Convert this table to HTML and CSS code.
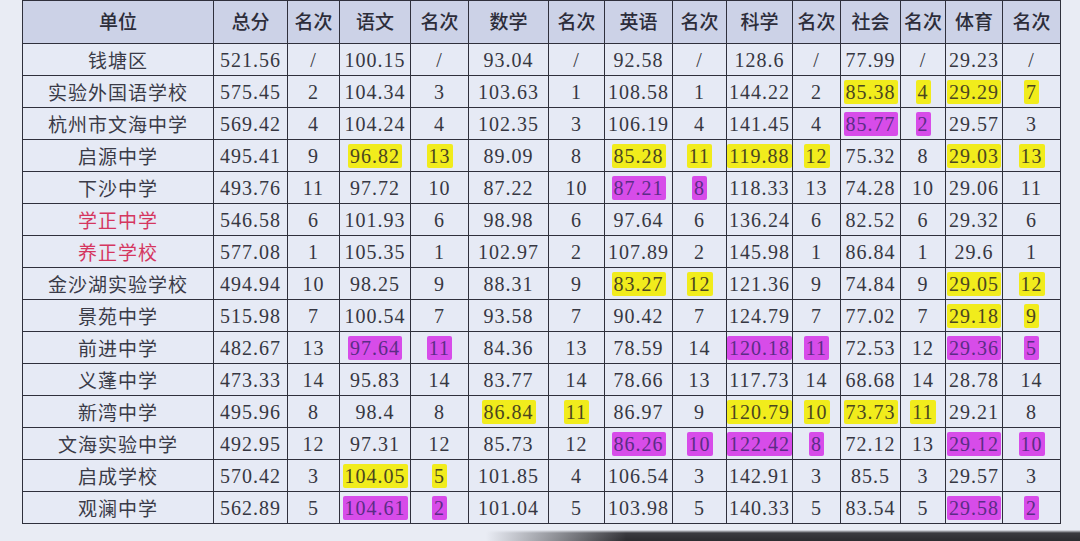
FILE: index.html
```html
<!DOCTYPE html>
<html lang="zh-CN">
<head>
<meta charset="utf-8">
<title>成绩表</title>
<link rel="stylesheet" href="styles.css">
</head>
<body>
<div class="sheet">
<table class="scores">
<colgroup>
<col class="c-unit"><col class="c-total"><col class="c-r1"><col class="c-yw"><col class="c-r2"><col class="c-sx"><col class="c-r3"><col class="c-yy"><col class="c-r4"><col class="c-kx"><col class="c-r5"><col class="c-sh"><col class="c-r6"><col class="c-ty"><col class="c-r7">
</colgroup>
<thead>
<tr><th>单位</th><th>总分</th><th>名次</th><th>语文</th><th>名次</th><th>数学</th><th>名次</th><th>英语</th><th>名次</th><th>科学</th><th>名次</th><th>社会</th><th>名次</th><th>体育</th><th>名次</th></tr>
</thead>
<tbody>
<tr><td class="name">钱塘区</td><td>521.56</td><td>/</td><td>100.15</td><td>/</td><td>93.04</td><td>/</td><td>92.58</td><td>/</td><td>128.6</td><td>/</td><td>77.99</td><td>/</td><td>29.23</td><td>/</td></tr>
<tr><td class="name">实验外国语学校</td><td>575.45</td><td>2</td><td>104.34</td><td>3</td><td>103.63</td><td>1</td><td>108.58</td><td>1</td><td>144.22</td><td>2</td><td><span class="hy">85.38</span></td><td><span class="hy">4</span></td><td><span class="hy">29.29</span></td><td><span class="hy">7</span></td></tr>
<tr><td class="name">杭州市文海中学</td><td>569.42</td><td>4</td><td>104.24</td><td>4</td><td>102.35</td><td>3</td><td>106.19</td><td>4</td><td>141.45</td><td>4</td><td><span class="hm">85.77</span></td><td><span class="hm">2</span></td><td>29.57</td><td>3</td></tr>
<tr><td class="name">启源中学</td><td>495.41</td><td>9</td><td><span class="hy">96.82</span></td><td><span class="hy">13</span></td><td>89.09</td><td>8</td><td><span class="hy">85.28</span></td><td><span class="hy">11</span></td><td><span class="hy">119.88</span></td><td><span class="hy">12</span></td><td>75.32</td><td>8</td><td><span class="hy">29.03</span></td><td><span class="hy">13</span></td></tr>
<tr><td class="name">下沙中学</td><td>493.76</td><td>11</td><td>97.72</td><td>10</td><td>87.22</td><td>10</td><td><span class="hm">87.21</span></td><td><span class="hm">8</span></td><td>118.33</td><td>13</td><td>74.28</td><td>10</td><td>29.06</td><td>11</td></tr>
<tr><td class="name red">学正中学</td><td>546.58</td><td>6</td><td>101.93</td><td>6</td><td>98.98</td><td>6</td><td>97.64</td><td>6</td><td>136.24</td><td>6</td><td>82.52</td><td>6</td><td>29.32</td><td>6</td></tr>
<tr><td class="name red">养正学校</td><td>577.08</td><td>1</td><td>105.35</td><td>1</td><td>102.97</td><td>2</td><td>107.89</td><td>2</td><td>145.98</td><td>1</td><td>86.84</td><td>1</td><td>29.6</td><td>1</td></tr>
<tr><td class="name">金沙湖实验学校</td><td>494.94</td><td>10</td><td>98.25</td><td>9</td><td>88.31</td><td>9</td><td><span class="hy">83.27</span></td><td><span class="hy">12</span></td><td>121.36</td><td>9</td><td>74.84</td><td>9</td><td><span class="hy">29.05</span></td><td><span class="hy">12</span></td></tr>
<tr><td class="name">景苑中学</td><td>515.98</td><td>7</td><td>100.54</td><td>7</td><td>93.58</td><td>7</td><td>90.42</td><td>7</td><td>124.79</td><td>7</td><td>77.02</td><td>7</td><td><span class="hy">29.18</span></td><td><span class="hy">9</span></td></tr>
<tr><td class="name">前进中学</td><td>482.67</td><td>13</td><td><span class="hm">97.64</span></td><td><span class="hm">11</span></td><td>84.36</td><td>13</td><td>78.59</td><td>14</td><td><span class="hm">120.18</span></td><td><span class="hm">11</span></td><td>72.53</td><td>12</td><td><span class="hm">29.36</span></td><td><span class="hm">5</span></td></tr>
<tr><td class="name">义蓬中学</td><td>473.33</td><td>14</td><td>95.83</td><td>14</td><td>83.77</td><td>14</td><td>78.66</td><td>13</td><td>117.73</td><td>14</td><td>68.68</td><td>14</td><td>28.78</td><td>14</td></tr>
<tr><td class="name">新湾中学</td><td>495.96</td><td>8</td><td>98.4</td><td>8</td><td><span class="hy">86.84</span></td><td><span class="hy">11</span></td><td>86.97</td><td>9</td><td><span class="hy">120.79</span></td><td><span class="hy">10</span></td><td><span class="hy">73.73</span></td><td><span class="hy">11</span></td><td>29.21</td><td>8</td></tr>
<tr><td class="name">文海实验中学</td><td>492.95</td><td>12</td><td>97.31</td><td>12</td><td>85.73</td><td>12</td><td><span class="hm">86.26</span></td><td><span class="hm">10</span></td><td><span class="hm">122.42</span></td><td><span class="hm">8</span></td><td>72.12</td><td>13</td><td><span class="hm">29.12</span></td><td><span class="hm">10</span></td></tr>
<tr><td class="name">启成学校</td><td>570.42</td><td>3</td><td><span class="hy">104.05</span></td><td><span class="hy">5</span></td><td>101.85</td><td>4</td><td>106.54</td><td>3</td><td>142.91</td><td>3</td><td>85.5</td><td>3</td><td>29.57</td><td>3</td></tr>
<tr><td class="name">观澜中学</td><td>562.89</td><td>5</td><td><span class="hm">104.61</span></td><td><span class="hm">2</span></td><td>101.04</td><td>5</td><td>103.98</td><td>5</td><td>140.33</td><td>5</td><td>83.54</td><td>5</td><td><span class="hm">29.58</span></td><td><span class="hm">2</span></td></tr>
</tbody>
</table>
<div class="edge"></div>
</div>
</body>
</html>
```

FILE: styles.css
```css
html, body {
  margin: 0;
  padding: 0;
}
body {
  width: 1080px;
  height: 541px;
  overflow: hidden;
  background: #e9ecf4;
}
.sheet {
  display: flex;
  flex-direction: column;
  height: 541px;
}
.scores {
  flex: none;
  margin-left: 22px;
  width: 1038px;
  table-layout: fixed;
  border-collapse: collapse;
  font-family: "Liberation Serif", "Noto Sans CJK SC", serif;
  color: #363742;
}
.c-unit { width: 191px; }
.c-total { width: 74px; }
.c-r1 { width: 52px; }
.c-yw { width: 71px; }
.c-r2 { width: 58px; }
.c-sx { width: 80px; }
.c-r3 { width: 56px; }
.c-yy { width: 68px; }
.c-r4 { width: 54px; }
.c-kx { width: 66px; }
.c-r5 { width: 48px; }
.c-sh { width: 60px; }
.c-r6 { width: 45px; }
.c-ty { width: 57px; }
.c-r7 { width: 58px; }

.scores th,
.scores td {
  border: 1.5px solid #2f303c;
  text-align: center;
  vertical-align: middle;
  padding: 0;
  white-space: nowrap;
}
.scores th {
  height: 43px;
  background: #ccd2e7;
  font-family: "Noto Sans CJK SC", sans-serif;
  font-weight: 500;
  font-size: 19px;
  line-height: 24px;
  color: #2c2d3a;
  vertical-align: top;
  padding-top: 8px;
  box-sizing: border-box;
}
.scores td {
  height: 32px;
  box-sizing: border-box;
  background: #e6eaf5;
  font-size: 20px;
  line-height: 24px;
  letter-spacing: 1px;
}
.scores td.name {
  font-family: "Noto Sans CJK SC", sans-serif;
  font-weight: 400;
  font-size: 19px;
  letter-spacing: 1px;
  color: #3a3b48;
}
.scores td.red {
  color: #d5365f;
}
.hy,
.hm {
  display: inline-block;
  padding: 0 2px;
  line-height: 24px;
  border-radius: 2px;
}
.hy {
  background: #f1ec1c;
  color: #4b4620;
}
.hm {
  background: #d74ce9;
  color: #5b2c86;
}
.edge {
  flex: 1;
  min-height: 8px;
  background:
    linear-gradient(to right, #e9ecf4 0, #e9ecf4 45%, rgba(233, 236, 244, 0) 58%),
    linear-gradient(to bottom, #e9ecf4 0, #e9ecf4 6px, #3b3b40 9px, #2c2c30 100%);
}
```
